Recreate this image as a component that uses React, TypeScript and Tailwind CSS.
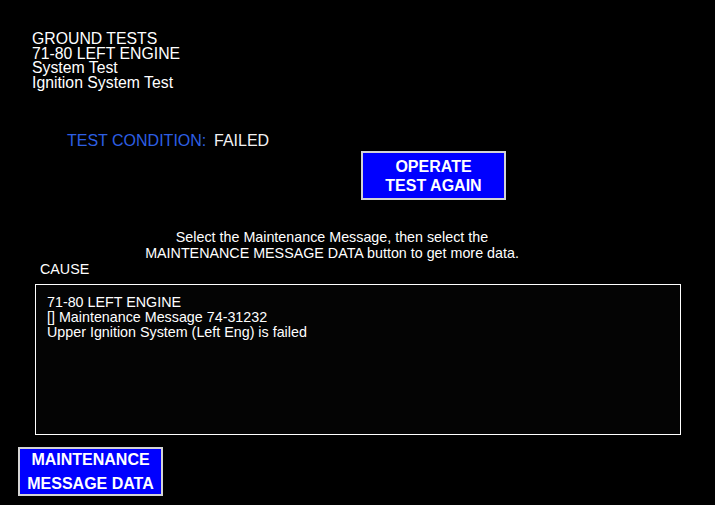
import React from 'react';

function PanelButton({ lines, leading }: { lines: string[]; leading: string }) {
  return (
    <button
      className={`w-[145px] h-[49px] bg-[#0000ff] border-2 border-[#d4d4d4] text-white font-bold text-[16px] flex flex-col items-center justify-center ${leading}`}
    >
      {lines.map((l) => (
        <span key={l}>{l}</span>
      ))}
    </button>
  );
}

export default function App() {
  return (
    <div
      className="w-[715px] h-[505px] bg-black text-white overflow-hidden"
      style={{ fontFamily: '"Liberation Sans", Arial, sans-serif' }}
    >
      <div className="pl-[32px] pt-[32px] text-[15.8px] leading-[14.5px]">
        <div>GROUND TESTS</div>
        <div>71-80 LEFT ENGINE</div>
        <div>System Test</div>
        <div>Ignition System Test</div>
      </div>

      <div className="mt-[42px] pl-[67px] flex text-[16px] leading-[18px] h-[18px]">
        <span className="w-[147px] text-[#2d5fe3]">TEST CONDITION:</span>
        <span className="text-[#f2f2f2]">FAILED</span>
      </div>

      <div className="mt-[1px] pl-[361px]">
        <PanelButton lines={['OPERATE', 'TEST AGAIN']} leading="leading-[19px]" />
      </div>

      <div className="mt-[29px] w-[664px] text-center text-[14.3px] leading-[16px]">
        <div>Select the Maintenance Message, then select the</div>
        <div>MAINTENANCE MESSAGE DATA button to get more data.</div>
      </div>

      <div className="pl-[40px] text-[14.3px] leading-[16px]">CAUSE</div>

      <div className="mt-[7px] ml-[35px] w-[646px] h-[151px] border border-white bg-[#040404] pt-[10px] pl-[11px] text-[14.3px] leading-[15px]">
        <div>71-80 LEFT ENGINE</div>
        <div>[] Maintenance Message 74-31232</div>
        <div>Upper Ignition System (Left Eng) is failed</div>
      </div>

      <div className="mt-[12px] ml-[18px]">
        <PanelButton lines={['MAINTENANCE', 'MESSAGE DATA']} leading="leading-[24px]" />
      </div>
    </div>
  );
}
